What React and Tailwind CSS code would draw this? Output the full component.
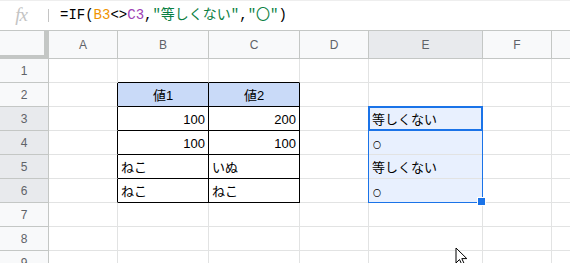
const COLS = ['A', 'B', 'C', 'D', 'E', 'F', 'G']
const ROWS = [1, 2, 3, 4, 5, 6, 7, 8, 9]

const DATA = {
  'B2': { v: '値1', align: 'center', bg: 'bg-[#c9daf8]' },
  'C2': { v: '値2', align: 'center', bg: 'bg-[#c9daf8]' },
  'B3': { v: '100', align: 'right' },
  'C3': { v: '200', align: 'right' },
  'B4': { v: '100', align: 'right' },
  'C4': { v: '100', align: 'right' },
  'B5': { v: 'ねこ' },
  'C5': { v: 'いぬ' },
  'B6': { v: 'ねこ' },
  'C6': { v: 'ねこ' },
  'E3': { v: '等しくない' },
  'E4': { v: '〇', small: true },
  'E5': { v: '等しくない' },
  'E6': { v: '〇', small: true },
}

const inTable = (c, r) => (c === 'B' || c === 'C') && r >= 2 && r <= 6
const inSel = (c, r) => c === 'E' && r >= 3 && r <= 6

function Cell({ c, r }) {
  const d = DATA[c + r]
  const table = inTable(c, r)
  // left/top edges of the table share the neighbour's border
  const rightBlack = table || (c === 'A' && r >= 2 && r <= 6)
  const bottomBlack = table || ((c === 'B' || c === 'C') && r === 1)
  const bg = d?.bg || (inSel(c, r) ? 'bg-[#e8f0fe]' : 'bg-white')
  const justify = d?.align === 'right' ? 'justify-end' : d?.align === 'center' ? 'justify-center' : 'justify-start'
  return (
    <div
      className={`h-[24px] border-r border-b flex items-end px-[3px] pb-[2px] text-[13px] leading-[17px] text-black overflow-hidden whitespace-nowrap
        ${rightBlack ? 'border-r-black' : 'border-r-[#e2e3e3]'}
        ${bottomBlack ? 'border-b-black' : 'border-b-[#e2e3e3]'}
        ${bg} ${justify}`}
    >
      {d && (d.small
        ? <span className="text-[8px] leading-[12px] pl-[1px]">{d.v}</span>
        : <span>{d.v}</span>)}
    </div>
  )
}

function Cursor() {
  return (
    <svg width="14" height="21" viewBox="0 0 14 21" className="absolute left-[455px] top-[216px]">
      <path d="M1 1 L1 16 L4.5 12.5 L7.5 19 L9.8 18 L6.8 11.6 L11.8 11.6 Z"
        fill="white" stroke="black" strokeWidth="1" strokeLinejoin="round" />
    </svg>
  )
}

export default function App() {
  return (
    <div className="w-[570px] h-[263px] overflow-hidden bg-white font-['Liberation_Sans','Noto_Sans_CJK_JP',sans-serif]">
      {/* Formula bar */}
      <div className="h-[31px] border-t border-t-[#eeeeee] border-b border-b-[#c4c7c5] flex items-center">
        <div className="w-[48px] flex justify-center">
          <span className="font-['Liberation_Serif',serif] italic text-[19px] text-[#c4c4c4] tracking-[-1px] pr-[6px]">fx</span>
        </div>
        <div className="w-px h-[13px] bg-[#c4c4c4]" />
        <div className="pl-[11px] font-['Liberation_Mono','Noto_Sans_CJK_JP',monospace] text-[14px] text-black whitespace-nowrap">
          <span>=IF(</span>
          <span className="text-[#f09300]">B3</span>
          <span>&lt;&gt;</span>
          <span className="text-[#9e41b5]">C3</span>
          <span>,</span>
          <span className="text-[#0b8043]">"等しくない"</span>
          <span>,</span>
          <span className="text-[#0b8043]">"〇"</span>
          <span>)</span>
        </div>
      </div>

      {/* Grid */}
      <div className="relative">
        <div className="grid grid-cols-[49px_69px_91px_91px_69px_114px_69px_100px] w-max">
          <div className="h-[28px] bg-[#f8f9fa] border-r-[5px] border-b-[4px] border-[#c4c7c5]" />
          {COLS.map(c => (
            <div key={c}
              className={`h-[28px] border-r border-b border-[#c4c7c5] flex items-center justify-center text-[12px] text-[#5f6368]
                ${c === 'E' ? 'bg-[#e8eaed]' : 'bg-[#f8f9fa]'}`}>
              {c === 'G' ? null : c}
            </div>
          ))}
          {ROWS.map(r => (
            <div key={r} className="contents">
              <div className={`h-[24px] border-r border-b border-[#c4c7c5] flex items-center justify-center text-[12px] text-[#5f6368]
                ${r >= 3 && r <= 6 ? 'bg-[#e8eaed]' : 'bg-[#f8f9fa]'}`}>
                {r}
              </div>
              {COLS.map(c => <Cell key={c} c={c} r={r} />)}
            </div>
          ))}
        </div>

        {/* Selection E3:E6 */}
        <div className="absolute left-[368px] top-[75px] w-[115px] h-[97px] border border-[#1a73e8] pointer-events-none" />
        <div className="absolute left-[368px] top-[75px] w-[115px] h-[25px] border-2 border-[#1a73e8] pointer-events-none" />
        <div className="absolute left-[478px] top-[167px] w-[7px] h-[7px] bg-[#1a73e8] border border-white box-content -m-px" />
        <Cursor />
      </div>
    </div>
  )
}
